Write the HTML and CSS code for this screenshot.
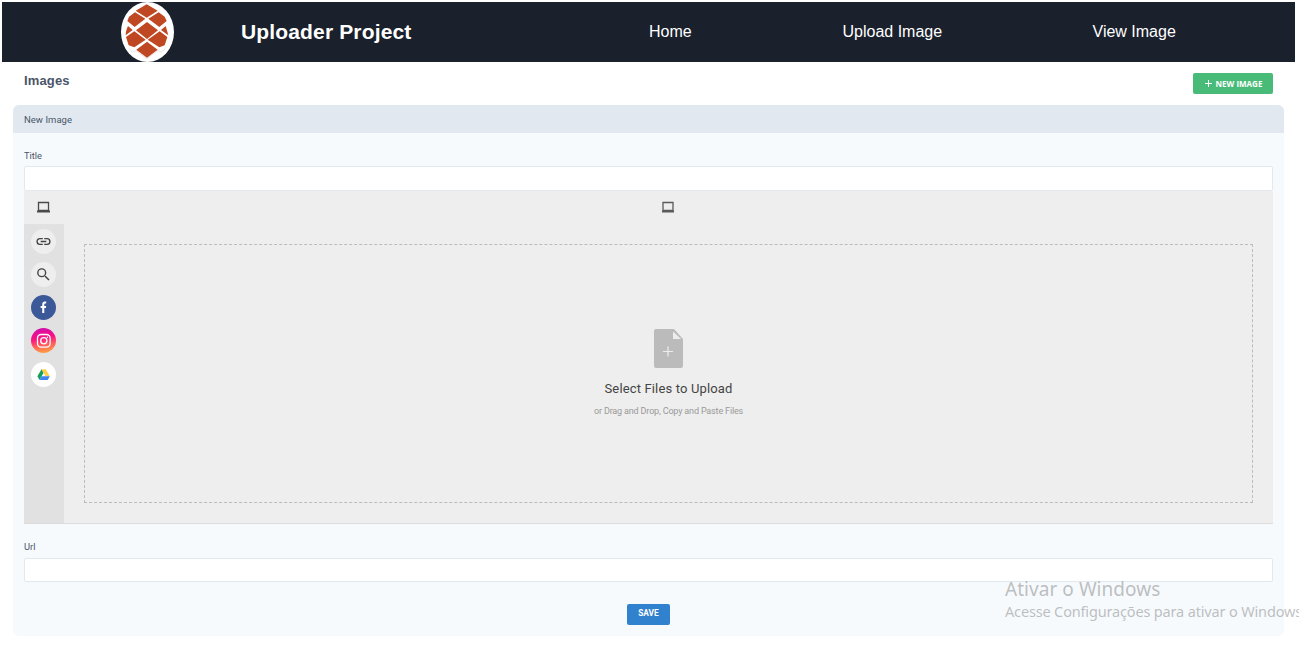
FILE: index.html
```
<!DOCTYPE html>
<html lang="en">
<head>
<meta charset="utf-8">
<title>Uploader Project</title>
<link rel="stylesheet" href="styles.css">
</head>
<body>
<header class="topbar">
  <svg class="logo" viewBox="3 6 159 180" preserveAspectRatio="none">
    <ellipse cx="82.500" cy="96" rx="79.500" ry="90" fill="#fff"/>
    <path d="M27 146l10 10 12-4 32 24 32-24 12 4 11-10" fill="none" stroke="#e6e6e6" stroke-width="3"/>
    <path fill="#bf4722" d="M80 13l33 19-33 21-33-21zM45 37l31 19-32 25-22-18 5-13zM116 37l18 13 6 13-22 18-33-25zM81 66l33 25-33 26-33-26zM24 78l14 12-21 16c0-10 3-19 7-28zM137 78l8 28-22-16zM43 94l34 25-34 23-17-6-8-25zM119 94l23 17-8 25-16 6-35-23zM81 125l32 24-32 24-32-24z"/>
  </svg>
  <h1 class="brand">Uploader Project</h1>
  <nav class="nav">
    <a class="nav-home">Home</a>
    <a class="nav-upload">Upload Image</a>
    <a class="nav-view">View Image</a>
  </nav>
</header>
<main class="main">
  <div class="heading">
    <h2 class="heading-title">Images</h2>
    <a class="btn-new"><svg width="7" height="7" viewBox="0 0 7 7"><path d="M3.500 0v7M0 3.500h7" stroke="#fff"/></svg><span>NEW IMAGE</span></a>
  </div>
  <section class="card">
    <div class="card-head">New Image</div>
    <form class="form">
      <label class="label">Title</label>
      <input class="input" type="text">
      <div class="picker">
        <div class="picker-top">
          <div class="picker-tab"><svg width="13" height="12" viewBox="0 0 13 12"><path d="M1.500 1.500h10v8h-10z" fill="none" stroke="#4a4a4a" stroke-width="1.300"/><path d="M0 9.500h13v2H0z" fill="#4a4a4a"/></svg></div>
          <div class="picker-title"><svg width="14" height="12" viewBox="0 0 14 12"><path d="M2 1.500h10v8H2z" fill="none" stroke="#5a5a5a" stroke-width="1.300"/><path d="M1 9.500h12v2H1z" fill="#5a5a5a"/></svg></div>
        </div>
        <div class="picker-body">
          <div class="rail">
            <span class="source"><svg width="17" height="17" viewBox="0 0 24 24" fill="#444"><path d="M3.900 12c0-1.710 1.390-3.100 3.100-3.100h4V7H7a5 5 0 000 10h4v-1.900H7c-1.710 0-3.100-1.390-3.100-3.100zM8 13h8v-2H8v2zm9-6h-4v1.900h4a3.100 3.100 0 010 6.200h-4V17h4a5 5 0 000-10z"/></svg></span>
            <span class="source"><svg width="17" height="17" viewBox="0 0 24 24" fill="#444"><path d="M15.500 14h-.79l-.28-.27A6.500 6.500 0 0016 9.500 6.500 6.500 0 109.500 16c1.610 0 3.090-.59 4.230-1.570l.27.28v.79l5 4.990L20.490 19l-4.990-5zm-6 0a4.500 4.500 0 110-9 4.500 4.500 0 010 9z"/></svg></span>
            <span class="source facebook"><svg width="25" height="25" viewBox="0 0 25 25"><path d="M11.200 18v-5H9.600v-2.100h1.600V9.500c0-1.900 1-2.900 2.700-2.900h1.300v2h-.9c-.8 0-1 .4-1 1.100v1.200h1.900l-.3 2.100h-1.600v5z" fill="#fff"/></svg></span>
            <span class="source instagram"><svg width="25" height="25" viewBox="0 0 25 25" fill="none" stroke="#fff" stroke-width="1.300"><rect x="6.500" y="6.500" width="12.600" height="12.600" rx="3.600"/><circle cx="12.800" cy="12.800" r="3.100"/><circle cx="16.400" cy="9.200" r=".8" fill="#fff" stroke="none"/></svg></span>
            <span class="source drive"><svg width="25" height="25" viewBox="0 0 25 25"><path d="M10.500 7.200l2.100 3.600-4.100 7.100-2.100-3.600z" fill="#11a05c"/><path d="M10.500 7.200h4.200l4.100 7.100h-4.200z" fill="#ffcf48"/><path d="M10.600 14.300h8.200l-2.100 3.600H8.500z" fill="#3f84f4"/></svg></span>
          </div>
          <div class="drop-area">
            <div class="drop">
              <svg width="29" height="39" viewBox="0 0 29 39"><path d="M2 0h18l9 10v27a2 2 0 01-2 2H2a2 2 0 01-2-2V2a2 2 0 012-2z" fill="#bbb"/><path d="M19 2.500V10h8z" fill="#ededed"/><path d="M14 17.500v10M9 22.500h10" stroke="#ededed" stroke-width="1.200"/></svg>
              <div class="drop-title">Select Files to Upload</div>
              <div class="drop-sub">or Drag and Drop, Copy and Paste Files</div>
            </div>
          </div>
        </div>
      </div>
      <label class="label label-url">Url</label>
      <input class="input input-url" type="text">
      <button class="save" type="button">SAVE</button>
    </form>
  </section>
</main>
<aside class="activation">
  <div class="activation-title">Ativar o Windows</div>
  <div class="activation-text">Acesse Configurações para ativar o Windows</div>
</aside>
</body>
</html>
```
FILE: styles.css
```
* { box-sizing: border-box; }
body { margin: 0; padding: 2px 0 0; height: 649px; overflow: hidden; background: #fff; font-family: "Liberation Sans", Arial, sans-serif; }
svg { display: block; flex: none; }
.topbar { display: flex; align-items: center; height: 60px; margin: 0 4px 0 2px; padding-left: 119px; background: #1a202c; color: #fff; white-space: nowrap; }
.logo { width: 53px; height: 60px; }
.brand { width: 408px; margin: 0 0 0 67px; font-size: 21px; line-height: 24px; letter-spacing: .15px; }
.nav { display: flex; font-size: 16px; line-height: 18px; }
.nav-home { width: 193.500px; }
.nav-upload { width: 250px; }
.main { padding: 0 15px 0 13px; }
.heading { display: flex; justify-content: space-between; height: 43px; padding: 11px 11px 0; }
.heading-title { margin: 0; font-size: 13px; line-height: 15px; color: #4a5568; letter-spacing: .15px; }
.btn-new { display: flex; align-items: center; justify-content: center; gap: 4px; width: 80px; height: 21px; padding-left: 1px; border-radius: 2px; background: #48bb78; color: #fff; font: 700 8px/22px "Open Sans", sans-serif; white-space: nowrap; }
.card { height: 531px; border-radius: 6px; overflow: hidden; background: #f6fafd; }
.card-head { height: 28px; padding-left: 11px; background: #e1e8f0; color: #4a5568; font: 400 9.500px/29px Roboto, sans-serif; letter-spacing: .03px; }
.form { display: flex; flex-direction: column; padding: 16px 11px 0; }
.label { height: 17px; font: 400 9.300px/14px Roboto, sans-serif; color: #4a5568; }
.input { width: 100%; height: 25px; padding: 0 8px; border: 1px solid #e1e8f0; border-radius: 2px; background: #fff; }
.picker { height: 333px; background: #eee; border-bottom: 1px solid #dcdcdc; }
.picker-top { display: flex; height: 33px; }
.picker-tab { display: flex; align-items: center; justify-content: center; width: 39px; padding-bottom: 1px; }
.picker-title { display: flex; flex: 1; align-items: center; justify-content: center; padding-bottom: 1px; }
.picker-body { display: flex; height: 299px; }
.rail { display: flex; flex-direction: column; align-items: center; gap: 8.300px; width: 40px; padding: 4.600px 1px 0 0; background: #e1e1e1; }
.source { display: flex; align-items: center; justify-content: center; width: 25px; height: 25px; border-radius: 50%; background: #eee; }
.facebook { background: #3b5998; }
.instagram { background: linear-gradient(170deg, #c80db3, #fa1083 40%, #ff5c5c 65%, #ffb13d); }
.drive { background: #fff; }
.drop-area { display: flex; flex: 1; padding: 20px; }
.drop { display: flex; flex: 1; flex-direction: column; align-items: center; padding-top: 84px; border: 1px dashed #bbb; }
.drop-title { margin-top: 13px; font: 400 13px/16px Roboto, sans-serif; letter-spacing: .15px; color: #444; }
.drop-sub { margin-top: 8px; font: 400 9px/12px Roboto, sans-serif; letter-spacing: -.16px; color: #999; }
.label-url { height: 18px; margin-top: 16px; }
.input-url { height: 24px; }
.save { align-self: center; width: 43px; height: 21px; margin-top: 22px; padding: 0 0 2px; border: 0; border-radius: 2px; background: #3182ce; color: #fff; font: 700 8.300px/19px Roboto, sans-serif; }
.activation { position: absolute; left: 1005px; top: 577px; color: rgba(130, 130, 130, .5); font-family: "Noto Sans", sans-serif; white-space: nowrap; }
.activation-title { font-size: 19px; line-height: 25px; letter-spacing: .05px; }
.activation-text { font-size: 14.500px; line-height: 18px; letter-spacing: -.16px; }
```
